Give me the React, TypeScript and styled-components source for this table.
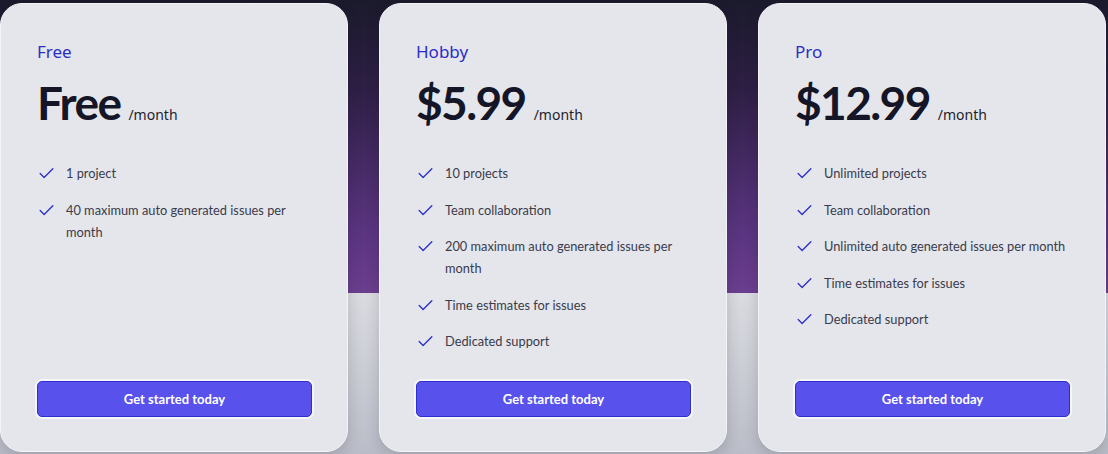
import { FC } from "react";
import styled, { createGlobalStyle } from "styled-components";
import { Check } from "lucide-react";

const GlobalStyle = createGlobalStyle`
  html, body {
    margin: 0;
    padding: 0;
  }
  body {
    font-family: "Noto Sans", "Open Sans", sans-serif;
    background: #c8cad2;
  }
`;

const Page = styled.div`
  width: 1108px;
  height: 454px;
  overflow: hidden;
  box-sizing: border-box;
  padding-top: 3px;
  background: linear-gradient(
    to bottom,
    #1b1a2c 0px,
    #2e1f45 90px,
    #5a3480 230px,
    #6b3e8f 293px,
    #dadbe1 293px,
    #babdc7 454px
  );
`;

const Grid = styled.div`
  display: grid;
  grid-template-columns: repeat(3, 348px);
  gap: 31px;
  align-items: stretch;
`;

const Card = styled.div`
  height: 449px;
  box-sizing: border-box;
  display: flex;
  flex-direction: column;
  padding: 36px 35px 34px 36px;
  background: #e5e6eb;
  border: 1px solid #f4f4f7;
  border-radius: 22px;
  box-shadow: 0 4px 14px rgba(20, 20, 40, 0.18);
`;

const Tier = styled.div`
  font-size: 17px;
  line-height: 24px;
  color: #2a2ec8;
`;

const PriceRow = styled.div`
  display: flex;
  align-items: baseline;
  gap: 8px;
  margin-top: 16px;
`;

const Price = styled.span`
  font-family: Lato, "Noto Sans", sans-serif;
  font-size: 46px;
  line-height: 46px;
  font-weight: 700;
  letter-spacing: -1.6px;
  color: #141526;
`;

const Period = styled.span`
  font-size: 14px;
  color: #1d1e2c;
`;

const Features = styled.ul`
  list-style: none;
  margin: 36px -6px 0 0;
  padding: 0;
  display: flex;
  flex-direction: column;
  gap: 14.5px;
`;

const Feature = styled.li`
  display: flex;
  align-items: flex-start;
  gap: 10px;
  font-family: Lato, "Noto Sans", sans-serif;
  font-size: 12.8px;
  line-height: 22px;
  color: #3a3b4b;
`;

const Tick = styled(Check)`
  flex: none;
  margin-top: 2px;
  color: #2b30c8;
`;

const Button = styled.button`
  margin-top: auto;
  height: 36px;
  width: 100%;
  border: 1px solid #2e2fcf;
  border-radius: 5px;
  background: #5851ec;
  box-shadow: 0 0 0 2px #f6f6f9;
  color: #ffffff;
  font-family: Lato, "Noto Sans", sans-serif;
  font-size: 13px;
  font-weight: 700;
  cursor: pointer;
`;

type Plan = {
  tier: string;
  price: string;
  features: string[];
};

const plans: Plan[] = [
  {
    tier: "Free",
    price: "Free",
    features: ["1 project", "40 maximum auto generated issues per month"],
  },
  {
    tier: "Hobby",
    price: "$5.99",
    features: [
      "10 projects",
      "Team collaboration",
      "200 maximum auto generated issues per month",
      "Time estimates for issues",
      "Dedicated support",
    ],
  },
  {
    tier: "Pro",
    price: "$12.99",
    features: [
      "Unlimited projects",
      "Team collaboration",
      "Unlimited auto generated issues per month",
      "Time estimates for issues",
      "Dedicated support",
    ],
  },
];

const PricingCard: FC<{ plan: Plan }> = ({ plan }) => (
  <Card>
    <Tier>{plan.tier}</Tier>
    <PriceRow>
      <Price>{plan.price}</Price>
      <Period>/month</Period>
    </PriceRow>
    <Features>
      {plan.features.map((f) => (
        <Feature key={f}>
          <Tick size={19} strokeWidth={1.7} />
          <span>{f}</span>
        </Feature>
      ))}
    </Features>
    <Button>Get started today</Button>
  </Card>
);

const App: FC = () => {
  return (
    <>
      <GlobalStyle />
      <Page>
        <Grid>
          {plans.map((p) => (
            <PricingCard key={p.tier} plan={p} />
          ))}
        </Grid>
      </Page>
    </>
  );
};

export default App;
